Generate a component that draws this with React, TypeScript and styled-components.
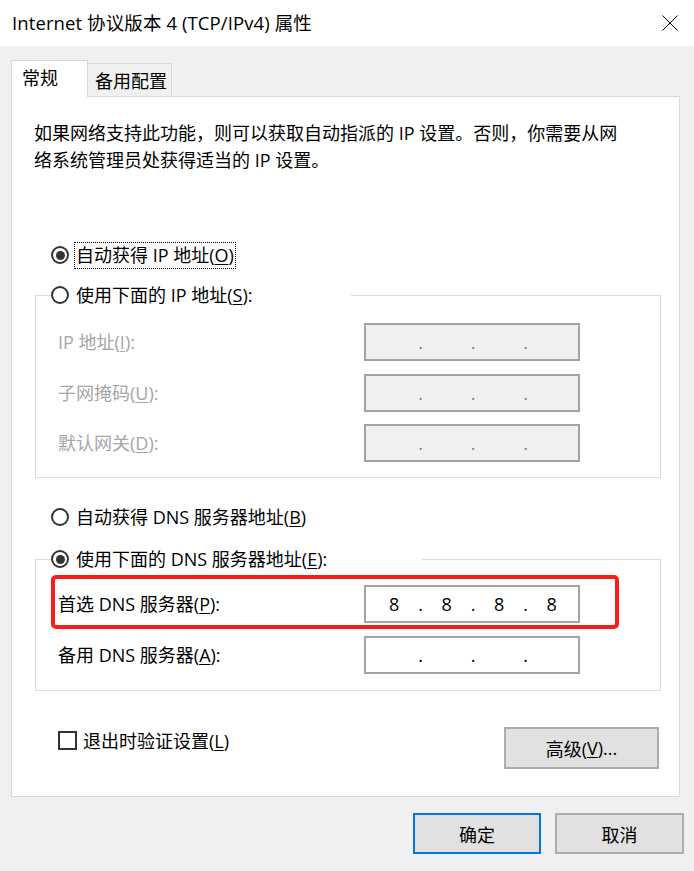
import React from "react";
import styled, { createGlobalStyle } from "styled-components";

const FONT = `"Open Sans", "Noto Sans CJK SC", sans-serif`;

const GlobalStyle = createGlobalStyle`
  html, body { margin: 0; padding: 0; background: #f0f0f0; }
  body { font-family: ${FONT}; }
  *, *::before, *::after { box-sizing: border-box; }
`;

const Window = styled.div`
  width: 694px;
  height: 871px;
  background: #f0f0f0;
  display: flex;
  flex-direction: column;
  font-family: ${FONT};
  font-size: 18px;
  color: #000;
  overflow: hidden;
`;

const TitleBar = styled.div`
  height: 46px;
  flex-shrink: 0;
  background: #fff;
  display: flex;
  align-items: center;
  justify-content: space-between;
  padding: 0 16px 0 12px;
`;

const Title = styled.span`
  font-size: 18.5px;
  line-height: 24px;
  letter-spacing: 0.1px;
  white-space: nowrap;
`;

const Body = styled.div`
  flex: 1;
  display: flex;
  flex-direction: column;
  padding: 14px 10px 0 11px;
`;

const TabStrip = styled.div`
  display: flex;
  align-items: flex-end;
  height: 37px;
  margin-bottom: -1px;
  position: relative;
  z-index: 1;
`;

const Tab = styled.div<{ $active?: boolean }>`
  height: ${(p) => (p.$active ? 37 : 33)}px;
  width: ${(p) => (p.$active ? 77 : 84)}px;
  margin-bottom: ${(p) => (p.$active ? 0 : 1)}px;
  background: ${(p) => (p.$active ? "#fff" : "#f0f0f0")};
  border: 1px solid #d9d9d9;
  border-bottom: none;
  border-left: ${(p) => (p.$active ? "1px solid #d9d9d9" : "none")};
  padding: 4px 0 0 ${(p) => (p.$active ? 10 : 7)}px;
  line-height: 26px;
  white-space: nowrap;
`;

const Panel = styled.div`
  width: 669px;
  height: 701px;
  flex-shrink: 0;
  background: #fff;
  border: 1px solid #d9d9d9;
  display: flex;
  flex-direction: column;
  padding: 23px 0 0 22px;
`;

const Description = styled.p`
  margin: 0;
  line-height: 27px;
  white-space: nowrap;
`;

const RadioRow = styled.div<{ $mt: number }>`
  display: flex;
  align-items: center;
  height: 28px;
  margin-top: ${(p) => p.$mt}px;
  padding-left: 17px;
`;

const RadioCircle = styled.span<{ $checked?: boolean }>`
  width: 18px;
  height: 18px;
  border: 2px solid #333;
  border-radius: 50%;
  display: flex;
  align-items: center;
  justify-content: center;
  flex-shrink: 0;
  background: #fff;
  &::after {
    content: "";
    width: 9px;
    height: 9px;
    border-radius: 50%;
    background: ${(p) => (p.$checked ? "#333" : "transparent")};
  }
`;

const OptionLabel = styled.span<{ $focused?: boolean }>`
  margin-left: ${(p) => (p.$focused ? 5 : 7)}px;
  padding: 0 ${(p) => (p.$focused ? 1 : 0)}px;
  border: ${(p) => (p.$focused ? "1px dotted #000" : "none")};
  line-height: 25px;
  white-space: nowrap;
`;

const Key = styled.u`
  text-underline-offset: 2px;
`;

const Group = styled.fieldset<{ $mt: number; $pb: number }>`
  margin: ${(p) => p.$mt}px 0 0 1px;
  padding: 0 0 ${(p) => p.$pb}px 0;
  width: 626px;
  min-width: 0;
  border: 1px solid #dcdcdc;
`;

const Legend = styled.legend<{ $w: number }>`
  margin-left: 15px;
  padding: 0;
  width: ${(p) => p.$w}px;
  height: 28px;
  display: flex;
  align-items: center;
`;

const FieldRow = styled.div<{ $mt: number }>`
  display: flex;
  align-items: center;
  margin: ${(p) => p.$mt}px 0 0 22px;
`;

const HighlightRow = styled.div<{ $mt: number }>`
  display: flex;
  align-items: center;
  margin: ${(p) => p.$mt}px 0 0 15px;
  width: 568px;
  height: 54px;
  padding: 4px 0 0 3px;
  border: 4px solid #fb1b1b;
  border-radius: 5px;
`;

const FieldLabel = styled.span<{ $disabled?: boolean }>`
  width: 306px;
  flex-shrink: 0;
  color: ${(p) => (p.$disabled ? "#a6a6a6" : "#000")};
  white-space: nowrap;
  line-height: 26px;
`;

const IpBox = styled.div<{ $disabled?: boolean }>`
  width: 216px;
  height: 38px;
  flex-shrink: 0;
  display: flex;
  align-items: center;
  padding-left: 2px;
  border: 2px solid #a3a3a3;
  background: ${(p) => (p.$disabled ? "#f0f0f0" : "#fff")};
  color: ${(p) => (p.$disabled ? "#7d8596" : "#000")};
`;

const Octet = styled.span`
  flex: 1;
  text-align: center;
  line-height: 26px;
`;

const Dot = styled.span`
  width: 0;
  display: flex;
  justify-content: center;
  line-height: 26px;
`;

const Footer = styled.div`
  display: flex;
  justify-content: space-between;
  align-items: flex-start;
  margin-top: 35px;
  padding: 0 20px 0 24px;
`;

const CheckRow = styled.div`
  display: flex;
  align-items: center;
  height: 28px;
`;

const CheckBox = styled.span`
  width: 19px;
  height: 19px;
  border: 2px solid #333;
  background: #fff;
  flex-shrink: 0;
`;

const CheckLabel = styled.span`
  margin-left: 6px;
  white-space: nowrap;
`;

const Button = styled.button<{ $w: number; $h: number; $default?: boolean }>`
  width: ${(p) => p.$w}px;
  height: ${(p) => p.$h}px;
  background: #e1e1e1;
  border: 2px solid ${(p) => (p.$default ? "#0078d7" : "#adadad")};
  font-family: ${FONT};
  font-size: 18px;
  color: #000;
  padding: 0;
  margin: 0;
  display: flex;
  align-items: center;
  justify-content: center;
  white-space: nowrap;
`;

const AdvancedButton = styled(Button)`
  margin-top: 1px;
`;

const DialogButtons = styled.div`
  display: flex;
  justify-content: flex-end;
  gap: 14px;
  margin-top: 16px;
`;

const CloseIcon = () => (
  <svg width="16" height="16" viewBox="0 0 16 16" aria-hidden="true">
    <path d="M0.5 0.5L15.5 15.5M15.5 0.5L0.5 15.5" stroke="#000" strokeWidth="1" fill="none" />
  </svg>
);

const IpField: React.FC<{ values?: string[]; disabled?: boolean }> = ({ values = ["", "", "", ""], disabled }) => (
  <IpBox $disabled={disabled}>
    {values.map((v, i) => (
      <React.Fragment key={i}>
        {i > 0 && <Dot>.</Dot>}
        <Octet>{v}</Octet>
      </React.Fragment>
    ))}
  </IpBox>
);

export default function App() {
  return (
    <>
      <GlobalStyle />
      <Window>
        <TitleBar>
          <Title>Internet 协议版本 4 (TCP/IPv4) 属性</Title>
          <CloseIcon />
        </TitleBar>
        <Body>
          <TabStrip>
            <Tab $active>常规</Tab>
            <Tab>备用配置</Tab>
          </TabStrip>
          <Panel>
            <Description>
              如果网络支持此功能，则可以获取自动指派的 IP 设置。否则，你需要从网
              <br />
              络系统管理员处获得适当的 IP 设置。
            </Description>

            <RadioRow $mt={67}>
              <RadioCircle $checked />
              <OptionLabel $focused>
                自动获得 IP 地址(<Key>O</Key>)
              </OptionLabel>
            </RadioRow>

            <Group $mt={12} $pb={15}>
              <Legend $w={300}>
                <RadioCircle />
                <OptionLabel>
                  使用下面的 IP 地址(<Key>S</Key>):
                </OptionLabel>
              </Legend>
              <FieldRow $mt={14}>
                <FieldLabel $disabled>
                  IP 地址(<Key>I</Key>):
                </FieldLabel>
                <IpField disabled />
              </FieldRow>
              <FieldRow $mt={13}>
                <FieldLabel $disabled>
                  子网掩码(<Key>U</Key>):
                </FieldLabel>
                <IpField disabled />
              </FieldRow>
              <FieldRow $mt={12}>
                <FieldLabel $disabled>
                  默认网关(<Key>D</Key>):
                </FieldLabel>
                <IpField disabled />
              </FieldRow>
            </Group>

            <RadioRow $mt={25}>
              <RadioCircle />
              <OptionLabel>
                自动获得 DNS 服务器地址(<Key>B</Key>)
              </OptionLabel>
            </RadioRow>

            <Group $mt={14} $pb={16}>
              <Legend $w={371}>
                <RadioCircle $checked />
                <OptionLabel>
                  使用下面的 DNS 服务器地址(<Key>E</Key>):
                </OptionLabel>
              </Legend>
              <HighlightRow $mt={2}>
                <FieldLabel>
                  首选 DNS 服务器(<Key>P</Key>):
                </FieldLabel>
                <IpField values={["8", "8", "8", "8"]} />
              </HighlightRow>
              <FieldRow $mt={7}>
                <FieldLabel>
                  备用 DNS 服务器(<Key>A</Key>):
                </FieldLabel>
                <IpField />
              </FieldRow>
            </Group>

            <Footer>
              <CheckRow>
                <CheckBox />
                <CheckLabel>
                  退出时验证设置(<Key>L</Key>)
                </CheckLabel>
              </CheckRow>
              <AdvancedButton $w={155} $h={42}>
                高级(<Key>V</Key>)...
              </AdvancedButton>
            </Footer>
          </Panel>
          <DialogButtons>
            <Button $w={128} $h={41} $default>
              确定
            </Button>
            <Button $w={129} $h={41}>
              取消
            </Button>
          </DialogButtons>
        </Body>
      </Window>
    </>
  );
}
